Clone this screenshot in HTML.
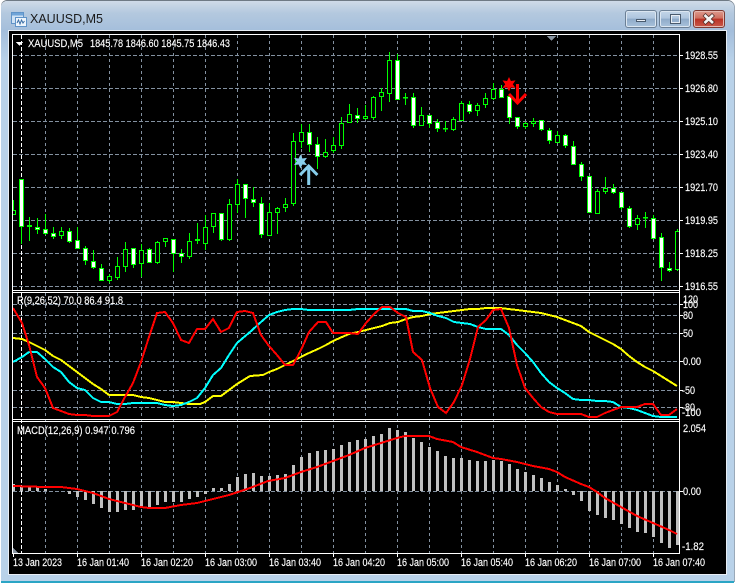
<!DOCTYPE html>
<html><head><meta charset="utf-8"><title>XAUUSD,M5</title>
<style>
html,body{margin:0;padding:0;background:#fff;width:737px;height:584px;overflow:hidden}
#win{position:absolute;left:1px;top:1px;width:733px;height:581px;border-radius:6px 6px 0 0;background:linear-gradient(#cfdbe8 0,#b4c9df 12px,#a4bedb 30px,#b9d2e9 60px,#b9d2e9 100%);box-shadow:0 -1px 0 0 #6f7a85,1px 0 0 0 #9aa9b8}
#bot{position:absolute;left:1px;top:581px;width:733px;height:2px;background:#2ba5c5}
#ch{position:absolute;left:9px;top:31px;width:717px;height:543px;background:#000;box-shadow:0 0 0 1px #e8eef5}
.b{position:absolute;top:10px;height:18px;box-sizing:border-box;border:1px solid #6b7f95;border-radius:3px;background:linear-gradient(#c3d5e8 0,#aec5de 45%,#8fabc9 50%,#a9c2dc 100%);box-shadow:inset 0 0 0 1px #dbe6f1}
.c{background:linear-gradient(#dd9a8e 0,#cf6f60 45%,#b93225 50%,#c9584a 100%);border-color:#7d3a33;box-shadow:inset 0 0 0 1px #e6b8b0}
#t{position:absolute;left:30px;top:10px;font:12.5px "Liberation Sans",sans-serif;color:#1a1a1a;line-height:18px;white-space:nowrap}
svg{position:absolute;left:0;top:0}
text{font-family:"Liberation Sans",sans-serif;font-size:11px;fill:#fff;stroke:#fff;stroke-width:.15}
</style></head><body>
<div id="win"></div><div id="bot"></div><div id="ch"></div>
<svg style="left:11px;top:11px" width="16" height="16" viewBox="0 0 16 16"><rect x="0.5" y="1.5" width="12" height="11" fill="#cfe2f5" stroke="#5f93c8"/><rect x="1" y="2" width="11" height="2.5" fill="#6fa4d8"/><rect x="4.5" y="6.5" width="11" height="9" fill="#eef5fc" stroke="#5f93c8"/><path d="M6 12l1.5-3 1.5 4 1.5-4 1.5 3 1.5-2" fill="none" stroke="#3b6ea5"/></svg>
<div id="t">XAUUSD,M5</div>
<div class="b" style="left:625px;width:32px"><div style="position:absolute;left:10px;top:8px;width:10px;height:3px;background:#e8eef5;border:1px solid #4a5b6e;box-sizing:border-box"></div></div>
<div class="b" style="left:659px;width:32px"><div style="position:absolute;left:10px;top:3px;width:11px;height:10px;border:2px solid #e8eef5;outline:1px solid #4a5b6e;outline-offset:-1px;box-sizing:border-box"></div></div>
<div class="b c" style="left:693px;width:32px"><svg width="30" height="16" viewBox="0 0 30 16"><path d="M10 3.5l9.5 9M19.5 3.5l-9.5 9" stroke="#4f2a25" stroke-width="4.2" fill="none"/><path d="M10.5 4l8.5 8M19 4l-8.5 8" stroke="#f3f3f3" stroke-width="2.6" fill="none"/></svg></div>
<svg width="737" height="584" viewBox="0 0 737 584" shape-rendering="crispEdges">
<defs><clipPath id="cp"><rect x="13" y="35" width="666" height="254"/></clipPath><clipPath id="c2"><rect x="13" y="292" width="666" height="261"/></clipPath></defs>
<!-- grid -->
<g stroke="#8391a0" stroke-width="1" fill="none">
<path stroke-dasharray="4 2" d="M13 55.5H679M13 88.5H679M13 121.5H679M13 154.5H679M13 187.5H679M13 220.5H679M13 253.5H679M13 286.5H679"/>
<path stroke-dasharray="4 2" d="M13 304.5H679M13 315.5H679M13 333.5H679M13 361.5H679M13 390.5H679M13 407.5H679M13 491.5H679"/>
<path stroke-dasharray="3 3" d="M45.5 35V553M77.5 35V553M109.5 35V553M141.5 35V553M173.5 35V553M205.5 35V553M237.5 35V553M269.5 35V553M301.5 35V553M333.5 35V553M365.5 35V553M397.5 35V553M429.5 35V553M461.5 35V553M493.5 35V553M525.5 35V553M557.5 35V553M589.5 35V553M621.5 35V553M653.5 35V553"/>
</g>
<path d="M21.5 35V553" stroke="#fff" stroke-dasharray="4 2" fill="none"/>
<path d="M547 36h9l-4.5 5z" fill="#8a96a3"/>
<path d="M13 548l5 5h-5z" fill="#8a96a3"/>
<path d="M16 42h7l-3.5 4z" fill="#fff"/>
<!-- candles -->
<g clip-path="url(#cp)">
<path stroke="#00ff00" fill="none" d="M13.5 200V215M21.5 179V244M29.5 217V241M37.5 218V234M45.5 214V235M53.5 227V239M61.5 227V239M69.5 228V243M77.5 227V249M85.5 246V265M93.5 250V269M101.5 264V281M109.5 274V283M117.5 257V280M125.5 242V272M133.5 248V268M141.5 244V277M149.5 248V263M157.5 241V264M165.5 238V247M173.5 239V272M181.5 249V263M189.5 233V259M197.5 223V244M205.5 215V250M213.5 213V233M221.5 213V241M229.5 199V241M237.5 179V213M245.5 184V218M253.5 187V207M261.5 197V238M269.5 203V236M277.5 207V234M285.5 198V212M293.5 133V206M301.5 124V148M309.5 124V152M317.5 137V169M325.5 139V158M333.5 137V153M341.5 117V149M349.5 104V123M357.5 108V123M365.5 105V120M373.5 96V120M381.5 88V111M389.5 52V102M397.5 54V100M405.5 93V105M413.5 93V128M421.5 107V126M429.5 115V128M437.5 119V132M445.5 121V132M453.5 117V131M461.5 101V121M469.5 101V114M477.5 103V116M485.5 93V108M493.5 83V100M501.5 85V98M509.5 96V124M517.5 117V129M525.5 122V129M533.5 118V127M541.5 120V131M549.5 128V144M557.5 131V143M565.5 134V148M573.5 141V165M581.5 162V181M589.5 176V213M597.5 189V214M605.5 177V194M613.5 184V194M621.5 192V210M629.5 206V228M637.5 215V230M645.5 212V228M653.5 215V238M661.5 233V281M669.5 262V272M677.5 229V271"/>
<path stroke="#00ff00" fill="#000" d="M11.5 210.5h4V214.5h-4zM27.5 225.5h4V226.5h-4zM59.5 231.5h4V235.5h-4zM107.5 276.5h4V280.5h-4zM115.5 266.5h4V277.5h-4zM123.5 249.5h4V266.5h-4zM139.5 250.5h4V263.5h-4zM155.5 242.5h4V262.5h-4zM163.5 238.5h4V241.5h-4zM187.5 241.5h4V256.5h-4zM195.5 239.5h4V240.5h-4zM203.5 227.5h4V243.5h-4zM211.5 213.5h4V226.5h-4zM227.5 204.5h4V239.5h-4zM235.5 184.5h4V204.5h-4zM267.5 212.5h4V235.5h-4zM275.5 208.5h4V212.5h-4zM283.5 204.5h4V207.5h-4zM291.5 141.5h4V203.5h-4zM299.5 132.5h4V141.5h-4zM323.5 152.5h4V156.5h-4zM331.5 145.5h4V150.5h-4zM339.5 123.5h4V145.5h-4zM347.5 114.5h4V122.5h-4zM363.5 116.5h4V118.5h-4zM371.5 97.5h4V117.5h-4zM379.5 92.5h4V96.5h-4zM387.5 60.5h4V93.5h-4zM403.5 97.5h4V98h-4zM419.5 115.5h4V125.5h-4zM443.5 128.5h4V129h-4zM451.5 119.5h4V129.5h-4zM459.5 103.5h4V120.5h-4zM475.5 105.5h4V110.5h-4zM483.5 98.5h4V104.5h-4zM491.5 89.5h4V98.5h-4zM523.5 123.5h4V126.5h-4zM531.5 121.5h4V123.5h-4zM555.5 135.5h4V142.5h-4zM595.5 191.5h4V213.5h-4zM603.5 188.5h4V191.5h-4zM635.5 218.5h4V224.5h-4zM643.5 217.5h4V218h-4zM675.5 231.5h4V269.5h-4z"/>
<path stroke="#00ff00" fill="#fff" d="M19.5 179.5h4V226.5h-4zM35.5 227.5h4V229.5h-4zM43.5 229.5h4V233.5h-4zM51.5 233.5h4V236.5h-4zM67.5 231.5h4V241.5h-4zM75.5 240.5h4V248.5h-4zM83.5 248.5h4V260.5h-4zM91.5 261.5h4V267.5h-4zM99.5 268.5h4V280.5h-4zM131.5 248.5h4V264.5h-4zM147.5 249.5h4V262.5h-4zM171.5 239.5h4V253.5h-4zM179.5 253.5h4V256.5h-4zM219.5 213.5h4V239.5h-4zM243.5 184.5h4V198.5h-4zM251.5 199.5h4V202.5h-4zM259.5 203.5h4V234.5h-4zM307.5 132.5h4V144.5h-4zM315.5 144.5h4V156.5h-4zM355.5 115.5h4V118.5h-4zM395.5 60.5h4V99.5h-4zM411.5 97.5h4V125.5h-4zM427.5 115.5h4V123.5h-4zM435.5 122.5h4V128.5h-4zM467.5 104.5h4V111.5h-4zM499.5 89.5h4V97.5h-4zM507.5 96.5h4V117.5h-4zM515.5 117.5h4V126.5h-4zM539.5 120.5h4V129.5h-4zM547.5 130.5h4V140.5h-4zM563.5 135.5h4V145.5h-4zM571.5 146.5h4V164.5h-4zM579.5 164.5h4V176.5h-4zM587.5 176.5h4V212.5h-4zM611.5 188.5h4V192.5h-4zM619.5 192.5h4V207.5h-4zM627.5 208.5h4V226.5h-4zM651.5 218.5h4V238.5h-4zM659.5 237.5h4V267.5h-4zM667.5 268.5h4V270.5h-4z"/>
</g>
<!-- signals -->
<g shape-rendering="auto">
<path fill="#87ceeb" d="M300.5 154.5l1.9 4 4.6-.6-2.7 3.6 2.7 3.6-4.6-.6-1.9 4-1.9-4-4.6.6 2.7-3.6-2.7-3.6 4.6.6z"/>
<path fill="none" stroke="#87ceeb" stroke-width="3" d="M308.7 185V167M300 175l8.7-9 8.7 9"/>
<path fill="#ff0000" d="M509 77l1.9 4 4.6-.6-2.7 3.800 2.7 3.800-4.6-.6-1.9 4-1.9-4-4.6.6 2.7-3.800-2.7-3.800 4.6.6z"/>
<path fill="none" stroke="#ff0000" stroke-width="3" d="M517.5 84V102M509 94l8.5 9 8.5-9"/>
</g>
<!-- RSI style -->
<g fill="none" stroke-width="2" clip-path="url(#c2)">
<polyline stroke="#ffff00" points="13,338 22,339 29,342 37,346 45,350 53,356 61,360 69,366 77,372 85,378 93,384 101,389 109,395 117,395 133,395 141,397 149,398 157,400 165,402 173,402 181,403 189,404 200,404 205,402 213,396 221,396 229,390 237,384 250,376 263,375 269,372 277,369 285,365 293,361 301,357 309,353 318,349 326,345 333,341 342,337 349,334 358,332 366,330 374,328 382,326 390,323 398,322 406,319 413,317 422,316 430,314 438,313 454,311 462,310 470,309 478,309 486,308 500,308 517,310 533,312 541,313 557,317 565,320 573,323 581,326 589,332 597,336 605,340 613,344 621,349 629,356 637,362 645,367 653,371 661,376 669,381 677,386"/>
<polyline stroke="#00ffff" points="13,362 22,357 29,352 37,352 45,359 53,367 61,372 69,382 77,388 85,390 93,398 101,402 109,402 117,404 125,404 133,403 141,403 149,403 157,403 165,405 173,406 181,405 189,402 197,398 205,388 213,375 221,368 229,355 237,343 250,332 261,322 269,315 277,312 285,310 293,309 301,309 309,310 318,310 326,310 333,310 342,310 349,310 358,309 374,309 390,309 406,309 413,311 422,311 430,313 438,316 446,318 454,322 462,323 470,324 478,327 486,329 501,329 509,335 517,345 525,353 533,362 541,373 549,382 557,388 565,393 573,399 581,400 589,400 597,401 605,401 613,402 621,407 629,408 637,410 645,413 653,416 661,417 677,417"/>
<polyline stroke="#ff0000" points="13,308 22,323 29,345 37,377 45,388 53,408 61,411 69,414 77,415 85,415 93,416 101,416 109,416 117,412 125,397 133,383 141,362 149,337 157,313 165,312 173,323 181,340 189,343 197,329 205,329 213,319 221,332 229,328 237,312 245,311 253,313 261,335 269,346 277,355 285,365 293,365 301,350 309,332 318,322 326,322 333,333 342,333 349,333 358,334 366,323 374,314 382,307 390,307 398,313 406,317 413,352 422,360 430,388 438,407 446,413 454,402 462,385 470,359 478,327 486,320 493,310 501,309 509,328 517,365 525,388 533,398 541,407 549,412 557,414 565,414 573,414 581,414 589,417 597,417 605,413 613,410 621,407 629,407 637,407 645,404 653,404 661,415 669,415 677,409"/>
</g>
<!-- MACD bars -->
<path stroke="#c0c0c0" stroke-width="3" fill="none" d="M13.5 484V491M21.5 487V491M29.5 487V491M37.5 487V491M45.5 489V491M69.5 491V494M77.5 491V497M85.5 491V500M93.5 491V504M101.5 491V508M109.5 491V512M117.5 491V512M125.5 491V510M133.5 491V510M141.5 491V508M149.5 491V507M157.5 491V505M165.5 491V502M173.5 491V502M181.5 491V502M189.5 491V499M197.5 491V497M205.5 491V494M213.5 488V491M221.5 488V491M229.5 484V491M237.5 477V491M245.5 474V491M253.5 473V491M261.5 476V491M269.5 476V491M277.5 475V491M285.5 474V491M293.5 465V491M301.5 457V491M309.5 453V491M317.5 451V491M325.5 450V491M333.5 449V491M341.5 445V491M349.5 442V491M357.5 440V491M365.5 439V491M373.5 436V491M381.5 434V491M389.5 428V491M397.5 430V491M405.5 432V491M413.5 438V491M421.5 442V491M429.5 447V491M437.5 451V491M445.5 456V491M453.5 458V491M461.5 458V491M469.5 460V491M477.5 461V491M485.5 461V491M493.5 460V491M501.5 461V491M509.5 464V491M517.5 469V491M525.5 472V491M533.5 475V491M541.5 478V491M549.5 482V491M557.5 485V491M565.5 489V491M573.5 491V495M581.5 491V501M589.5 491V511M597.5 491V515M605.5 491V518M613.5 491V520M621.5 491V524M629.5 491V528M637.5 491V532M645.5 491V533M653.5 491V537M661.5 491V543M669.5 491V548M677.5 491V545"/>
<polyline fill="none" stroke="#ff0000" stroke-width="2" points="13,486 45,487 61,487 77,489 85,491 93,493 101,496 109,499 117,501 133,505 141,507 149,508 165,508 181,505 197,503 213,499 229,495 250,488 268,481 285,478 301,472 317,467 333,461 349,455 365,448 381,443 397,438 405,436 429,436 437,439 453,442 461,447 477,452 493,458 501,459 517,462 533,466 549,469 557,472 565,477 581,484 589,487 597,492 605,498 621,507 637,516 653,523 669,530 677,534"/>
<!-- borders -->
<path stroke="#fff" fill="none" d="M12.5 34.5H679.5V553.5H12.5zM12.5 290.5H679.5M12.5 292.5H679.5M12.5 419.5H679.5M12.5 421.5H679.5"/>
<path stroke="#fff" fill="none" d="M680 55.5h3M680 88.5h3M680 121.5h3M680 154.5h3M680 187.5h3M680 220.5h3M680 253.5h3M680 286.5h3M680 304.5h3M680 315.5h3M680 333.5h3M680 361.5h3M680 390.5h3M680 407.5h3M680 491.5h3M13.5 554v3M77.5 554v3M141.5 554v3M205.5 554v3M269.5 554v3M333.5 554v3M397.5 554v3M461.5 554v3M525.5 554v3M589.5 554v3M653.5 554v3"/>
<!-- labels -->
<g shape-rendering="auto">
<text x="28" y="47" textLength="55" lengthAdjust="spacingAndGlyphs">XAUUSD,M5</text>
<text x="90" y="47" textLength="140" lengthAdjust="spacingAndGlyphs">1845.78 1846.60 1845.75 1846.43</text>
<text x="17" y="304" textLength="106" lengthAdjust="spacingAndGlyphs">R(9,26,52) 70.0 86.4 91.8</text>
<text x="17" y="434" textLength="118" lengthAdjust="spacingAndGlyphs">MACD(12,26,9) 0.947 0.796</text>
<text x="685" y="59" textLength="33" lengthAdjust="spacingAndGlyphs">1928.55</text>
<text x="685" y="92" textLength="33" lengthAdjust="spacingAndGlyphs">1926.80</text>
<text x="685" y="125" textLength="33" lengthAdjust="spacingAndGlyphs">1925.10</text>
<text x="685" y="158" textLength="33" lengthAdjust="spacingAndGlyphs">1923.40</text>
<text x="685" y="191" textLength="33" lengthAdjust="spacingAndGlyphs">1921.70</text>
<text x="685" y="224" textLength="33" lengthAdjust="spacingAndGlyphs">1919.95</text>
<text x="685" y="257" textLength="33" lengthAdjust="spacingAndGlyphs">1918.25</text>
<text x="685" y="290" textLength="33" lengthAdjust="spacingAndGlyphs">1916.55</text>
<text x="683" y="303" textLength="15" lengthAdjust="spacingAndGlyphs">120</text>
<text x="683" y="308" textLength="15" lengthAdjust="spacingAndGlyphs">100</text>
<text x="683" y="319" textLength="10" lengthAdjust="spacingAndGlyphs">80</text>
<text x="683" y="337" textLength="10" lengthAdjust="spacingAndGlyphs">50</text>
<text x="683" y="365" textLength="18" lengthAdjust="spacingAndGlyphs">0.00</text>
<text x="682" y="394" textLength="13" lengthAdjust="spacingAndGlyphs">-50</text>
<text x="682" y="411" textLength="13" lengthAdjust="spacingAndGlyphs">-80</text>
<text x="682" y="416" textLength="19" lengthAdjust="spacingAndGlyphs">-100</text>
<text x="683" y="432" textLength="23" lengthAdjust="spacingAndGlyphs">2.054</text>
<text x="683" y="495" textLength="18" lengthAdjust="spacingAndGlyphs">0.00</text>
<text x="682" y="550" textLength="22" lengthAdjust="spacingAndGlyphs">-1.82</text>
<text x="13" y="566" textLength="49" lengthAdjust="spacingAndGlyphs">13 Jan 2023</text>
<text x="77" y="566" textLength="52" lengthAdjust="spacingAndGlyphs">16 Jan 01:40</text>
<text x="141" y="566" textLength="52" lengthAdjust="spacingAndGlyphs">16 Jan 02:20</text>
<text x="205" y="566" textLength="52" lengthAdjust="spacingAndGlyphs">16 Jan 03:00</text>
<text x="269" y="566" textLength="52" lengthAdjust="spacingAndGlyphs">16 Jan 03:40</text>
<text x="333" y="566" textLength="52" lengthAdjust="spacingAndGlyphs">16 Jan 04:20</text>
<text x="397" y="566" textLength="52" lengthAdjust="spacingAndGlyphs">16 Jan 05:00</text>
<text x="461" y="566" textLength="52" lengthAdjust="spacingAndGlyphs">16 Jan 05:40</text>
<text x="525" y="566" textLength="52" lengthAdjust="spacingAndGlyphs">16 Jan 06:20</text>
<text x="589" y="566" textLength="52" lengthAdjust="spacingAndGlyphs">16 Jan 07:00</text>
<text x="653" y="566" textLength="52" lengthAdjust="spacingAndGlyphs">16 Jan 07:40</text>
</g>
</svg>
</body></html>
